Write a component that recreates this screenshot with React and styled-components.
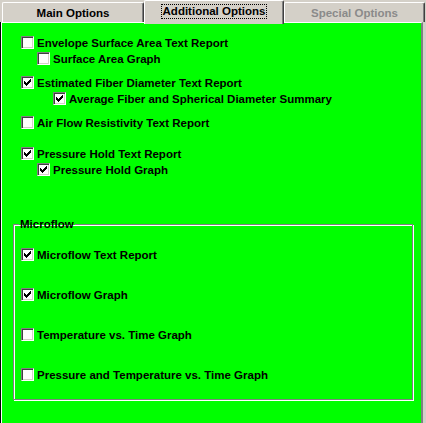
import React from 'react'
import styled, { createGlobalStyle } from 'styled-components'

const GlobalStyle = createGlobalStyle`
  body {
    margin: 0;
    background: #d4d0c8;
    font-family: "Liberation Sans", Arial, sans-serif;
  }
`

const Window = styled.div`
  width: 426px;
  height: 423px;
  overflow: hidden;
  display: flex;
  flex-direction: column;
  background: #d4d0c8;
`

const TabRow = styled.div`
  display: flex;
  height: 22px;
  padding-left: 2px;
  position: relative;
  z-index: 2;
`

const Tab = styled.div`
  box-sizing: border-box;
  width: ${p => p.$width}px;
  height: ${p => (p.$active ? 24 : 20)}px;
  margin-top: ${p => (p.$active ? 0 : 2)}px;
  background: #d4d0c8;
  border-top: 1px solid #fff;
  border-left: 1px solid #fff;
  border-right: 1px solid #404040;
  box-shadow: inset -1px 0 0 #808080;
  border-radius: 2px 2px 0 0;
  display: flex;
  align-items: center;
  justify-content: center;
  padding-bottom: ${p => (p.$active ? 2 : 0)}px;
  font-size: 11.5px;
  font-weight: bold;
  color: ${p => (p.$disabled ? '#8a8a8a' : '#000')};
`

const FocusLabel = styled.span`
  border: 1px dotted #000;
  padding: 0 1px;
  line-height: 13px;
`

const Panel = styled.div`
  flex: 1;
  margin-left: 1px;
  width: 422px;
  box-sizing: border-box;
  background: #00ff00;
  border-top: 1px solid #fff;
  border-left: 1px solid #fff;
  border-right: 2px solid #808080;
  box-shadow: -1px 0 0 #000;
  padding: 13px 0 0 0;
  display: flex;
  flex-direction: column;
`

const Row = styled.label`
  display: flex;
  align-items: center;
  height: 13px;
  margin-top: ${p => p.$gap || 0}px;
  padding-left: ${p => p.$indent}px;
  font-size: 11.5px;
  font-weight: bold;
  color: #000;
  white-space: nowrap;
`

const Box = styled.span`
  box-sizing: border-box;
  width: 13px;
  height: 13px;
  flex: none;
  background: #fff;
  border-top: 1px solid #808080;
  border-left: 1px solid #808080;
  border-right: 1px solid #fff;
  border-bottom: 1px solid #fff;
  box-shadow: inset 1px 1px 0 #404040, inset -1px -1px 0 #d4d0c8;
  margin-right: 3px;
  display: flex;
  align-items: center;
  justify-content: center;
`

const Group = styled.fieldset`
  box-sizing: border-box;
  margin: 0 0 0 11px;
  width: 400px;
  height: 182px;
  padding: 12px 0 0 7px;
  border: 1px solid #808080;
  box-shadow: inset 1px 1px 0 #fff, 1px 1px 0 #fff;
  display: flex;
  flex-direction: column;
`

const Legend = styled.legend`
  font-size: 11.5px;
  font-weight: bold;
  padding: 0 1px;
  margin-left: -2px;
  line-height: 13px;
`

const GroupBody = styled.div`
  display: flex;
  flex-direction: column;
`

const Check = () => (
  <svg width="7" height="7" viewBox="0 0 7 7" shapeRendering="crispEdges">
    <path d="M6 0h1v1H6zM5 1h1v1H5zM4 2h1v1H4zM3 3h1v1H3zM2 4h1v1H2zM1 3h1v1H1zM0 2h1v1H0z
             M6 1h1v1H6zM5 2h1v1H5zM4 3h1v1H4zM3 4h1v1H3zM2 5h1v1H2zM1 4h1v1H1zM0 3h1v1H0z
             M6 2h1v1H6zM5 3h1v1H5zM4 4h1v1H4zM3 5h1v1H3zM2 6h1v1H2zM1 5h1v1H1zM0 4h1v1H0z" fill="#000" />
  </svg>
)

const Option = ({ label, checked, indent = 19, gap }) => (
  <Row $indent={indent} $gap={gap}>
    <Box>{checked && <Check />}</Box>
    {label}
  </Row>
)

const App = () => (
  <>
    <GlobalStyle />
    <Window>
      <TabRow>
        <Tab $width={142}>Main Options</Tab>
        <Tab $width={140} $active>
          <FocusLabel>Additional Options</FocusLabel>
        </Tab>
        <Tab $width={141} $disabled>Special Options</Tab>
      </TabRow>
      <Panel>
        <Option label="Envelope Surface Area Text Report" />
        <Option label="Surface Area Graph" indent={35} gap={3} />
        <Option label="Estimated Fiber Diameter Text Report" checked gap={11} />
        <Option label="Average Fiber and Spherical Diameter Summary" checked indent={51} gap={3} />
        <Option label="Air Flow Resistivity Text Report" gap={11} />
        <Option label="Pressure Hold Text Report" checked gap={18} />
        <Option label="Pressure Hold Graph" checked indent={35} gap={3} />
        <div style={{ height: 42 }} />
        <Group>
          <Legend>Microflow</Legend>
          <GroupBody>
            <Option label="Microflow Text Report" checked indent={0} gap={5} />
            <Option label="Microflow Graph" checked indent={0} gap={27} />
            <Option label="Temperature vs. Time Graph" indent={0} gap={27} />
            <Option label="Pressure and Temperature vs. Time Graph" indent={0} gap={27} />
          </GroupBody>
        </Group>
      </Panel>
    </Window>
  </>
)

export default App
